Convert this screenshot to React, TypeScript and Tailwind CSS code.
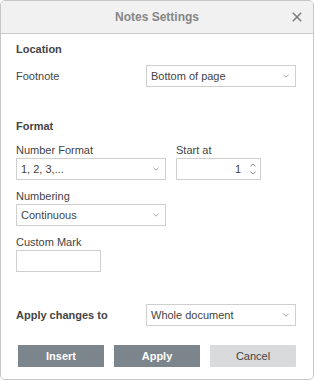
import React from 'react';

function Chevron() {
  return (
    <svg width="6" height="4" viewBox="0 0 6 4" className="shrink-0">
      <path d="M0.5 0.8 L3 3.2 L5.5 0.8" fill="none" stroke="#9a9a9a" strokeWidth="0.9" />
    </svg>
  );
}

function Select({ value, className = '' }: { value: string; className?: string }) {
  return (
    <div
      className={`h-[22px] border border-[#cfcfcf] bg-white flex items-center justify-between pl-[4px] pr-[6px] text-[11px] text-[#444] ${className}`}
    >
      <span>{value}</span>
      <Chevron />
    </div>
  );
}

function Label({ children, bold = false }: { children: React.ReactNode; bold?: boolean }) {
  return (
    <div className={`text-[11px] leading-[13px] text-[#444] ${bold ? 'font-bold' : ''}`}>{children}</div>
  );
}

export default function App() {
  return (
    <div
      className="w-[314px] h-[380px] bg-white border border-[#c6c6c6] rounded-[5px] overflow-hidden flex flex-col"
      style={{ fontFamily: '"Liberation Sans", Arial, sans-serif' }}
    >
      <header className="h-[33px] shrink-0 bg-[#f1f1f1] border-b border-[#cbcbcb] relative flex items-center justify-center">
        <span className="text-[12px] font-bold text-[#868686]">Notes Settings</span>
        <button className="absolute right-[10px] top-[10px] w-[12px] h-[12px] flex items-center justify-center">
          <svg width="10" height="10" viewBox="0 0 10 10">
            <path d="M0.8 0.8 L9.2 9.2 M9.2 0.8 L0.8 9.2" stroke="#7a7a7a" strokeWidth="1.5" />
          </svg>
        </button>
      </header>

      <div className="px-[15px] pt-[9px] flex flex-col">
        <Label bold>Location</Label>
        <div className="mt-[9px] flex items-center">
          <div className="w-[130px] text-[11px] text-[#444]">Footnote</div>
          <Select value="Bottom of page" className="w-[150px]" />
        </div>

        <div className="mt-[33px]">
          <Label bold>Format</Label>
        </div>
        <div className="mt-[11px] flex gap-[10px]">
          <div className="w-[150px] flex flex-col gap-[1px]">
            <Label>Number Format</Label>
            <Select value="1, 2, 3,..." />
          </div>
          <div className="w-[85px] flex flex-col gap-[1px]">
            <Label>Start at</Label>
            <div className="h-[22px] border border-[#cfcfcf] flex items-center justify-end pr-[4px] text-[11px] text-[#444]">
              <span className="mr-[9px]">1</span>
              <div className="flex flex-col gap-[4px]">
                <svg width="6" height="4" viewBox="0 0 6 4">
                  <path d="M0.5 3.3 L3 0.9 L5.5 3.3" fill="none" stroke="#777" strokeWidth="0.9" />
                </svg>
                <svg width="6" height="4" viewBox="0 0 6 4">
                  <path d="M0.5 0.7 L3 3.1 L5.5 0.7" fill="none" stroke="#777" strokeWidth="0.9" />
                </svg>
              </div>
            </div>
          </div>
        </div>

        <div className="mt-[10px] w-[150px] flex flex-col gap-[1px]">
          <Label>Numbering</Label>
          <Select value="Continuous" />
        </div>

        <div className="mt-[10px] flex flex-col gap-[1px]">
          <Label>Custom Mark</Label>
          <div className="w-[85px] h-[22px] border border-[#cfcfcf]" />
        </div>

        <div className="mt-[32px] flex items-center">
          <div className="w-[130px] text-[11px] font-bold text-[#444]">Apply changes to</div>
          <Select value="Whole document" className="w-[150px]" />
        </div>

        <div className="mt-[19px] pl-[2px] flex gap-[10px]">
          <button className="w-[86px] h-[22px] bg-[#7d858c] text-white text-[11px] font-bold">Insert</button>
          <button className="w-[86px] h-[22px] bg-[#7d858c] text-white text-[11px] font-bold">Apply</button>
          <button className="w-[86px] h-[22px] bg-[#d8dadc] text-[#444] text-[11px]">Cancel</button>
        </div>
      </div>
    </div>
  );
}
